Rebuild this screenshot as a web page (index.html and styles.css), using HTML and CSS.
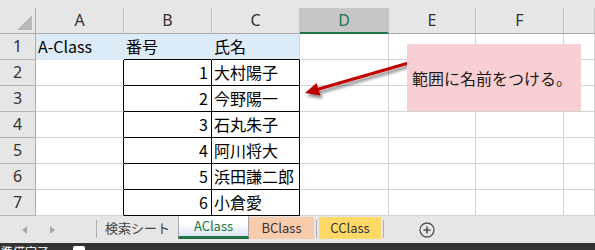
FILE: index.html
```html
<!DOCTYPE html>
<html lang="ja">
<head>
    <meta charset="UTF-8">
    <meta name="viewport" content="width=device-width, initial-scale=1.0">
    <title>AClass</title>
    <link rel="stylesheet" href="styles.css">
</head>
<body>
    <div class="sheet">
        <div class="topstrip"></div>
        <div class="grid">
            <div class="head corner"><span class="tri"></span></div>
            <div class="head">A</div>
            <div class="head">B</div>
            <div class="head">C</div>
            <div class="head sel">D</div>
            <div class="head">E</div>
            <div class="head">F</div>
            <div class="head"></div>

            <div class="rowhead">1</div>
            <div class="cell title">A-Class</div>
            <div class="cell title">番号</div>
            <div class="cell title last">氏名</div>
            <div class="cell"></div>
            <div class="cell"></div>
            <div class="cell"></div>
            <div class="cell"></div>

            <div class="rowhead">2</div>
            <div class="cell edge"></div>
            <div class="cell box num">1</div>
            <div class="cell box">大村陽子</div>
            <div class="cell"></div>
            <div class="cell"></div>
            <div class="cell"></div>
            <div class="cell"></div>

            <div class="rowhead">3</div>
            <div class="cell edge"></div>
            <div class="cell box num">2</div>
            <div class="cell box">今野陽一</div>
            <div class="cell"></div>
            <div class="cell"></div>
            <div class="cell"></div>
            <div class="cell"></div>

            <div class="rowhead">4</div>
            <div class="cell edge"></div>
            <div class="cell box num">3</div>
            <div class="cell box">石丸朱子</div>
            <div class="cell"></div>
            <div class="cell"></div>
            <div class="cell"></div>
            <div class="cell"></div>

            <div class="rowhead">5</div>
            <div class="cell edge"></div>
            <div class="cell box num">4</div>
            <div class="cell box">阿川将大</div>
            <div class="cell"></div>
            <div class="cell"></div>
            <div class="cell"></div>
            <div class="cell"></div>

            <div class="rowhead">6</div>
            <div class="cell edge"></div>
            <div class="cell box num">5</div>
            <div class="cell box">浜田謙二郎</div>
            <div class="cell"></div>
            <div class="cell"></div>
            <div class="cell"></div>
            <div class="cell"></div>

            <div class="rowhead">7</div>
            <div class="cell edge"></div>
            <div class="cell box num">6</div>
            <div class="cell box">小倉愛</div>
            <div class="cell"></div>
            <div class="cell"></div>
            <div class="cell"></div>
            <div class="cell"></div>
        </div>

        <svg class="arrow" width="595" height="216" viewBox="0 0 595 216">
            <defs>
                <filter id="shadow" x="-20%" y="-50%" width="140%" height="200%">
                    <feDropShadow dx="2" dy="3" stdDeviation="1.6" flood-color="#000" flood-opacity="0.45"/>
                </filter>
            </defs>
            <g filter="url(#shadow)">
                <line x1="412" y1="62" x2="317" y2="89.5" stroke="#c00000" stroke-width="3"/>
                <polygon points="305,93 316.5,83 320.5,95.5" fill="#c00000"/>
            </g>
        </svg>
        <div class="callout">範囲に名前をつける。</div>
    </div>

    <div class="tabbar">
        <div class="nav">
            <span class="prev"></span>
            <span class="next"></span>
        </div>
        <span class="sep"></span>
        <div class="tab search">検索シート</div>
        <div class="tab active">AClass</div>
        <div class="tab peach">BClass</div>
        <span class="sep small"></span>
        <div class="tab yellow">CClass</div>
        <span class="sep small"></span>
        <svg class="add" width="16" height="16" viewBox="0 0 16 16">
            <circle cx="8" cy="8" r="7" fill="none" stroke="#555" stroke-width="1.3"/>
            <path d="M4.5 8h7M8 4.5v7" stroke="#555" stroke-width="1.6"/>
        </svg>
    </div>

    <div class="status">
        <span class="ready">準備完了</span>
        <span class="macro"></span>
    </div>
</body>
</html>
```

FILE: styles.css
```css
body {
    margin: 0;
    width: 595px;
    height: 250px;
    overflow: hidden;
    background: #fff;
    font-family: "Noto Sans CJK JP", "Noto Sans", sans-serif;
}
.sheet {
    position: relative;
}
.topstrip {
    height: 8px;
    background: #e6e6e6;
}
.grid {
    display: grid;
    grid-template-columns: 36px 88px 88px 88px 89px 87px 88px 31px;
    grid-auto-rows: 26px;
}
.grid > div {
    box-sizing: border-box;
    border-right: 1px solid #d4d4d4;
    border-bottom: 1px solid #d4d4d4;
    white-space: nowrap;
    overflow: hidden;
}
.grid > .head {
    background: #e6e6e6;
    border-right-color: #c4c4c4;
    border-bottom-color: #ababab;
    text-align: center;
    font: 16px/25px "Noto Sans", sans-serif;
    color: #333;
}
.grid > .head.sel {
    background: #c6c6c6;
    color: #217346;
    border-bottom: 2px solid #217346;
    line-height: 24px;
}
.grid > .corner {
    position: relative;
    border-right-color: #ababab;
}
.tri {
    position: absolute;
    right: 3px;
    bottom: 3px;
    border-left: 15px solid transparent;
    border-bottom: 15px solid #b9b9b9;
}
.grid > .rowhead {
    background: #e6e6e6;
    border-right-color: #ababab;
    border-bottom-color: #b4b4b4;
    text-align: center;
    font: 16px/25px "Noto Sans", sans-serif;
    color: #333;
}
.grid > .cell {
    font-size: 16px;
    line-height: 24px;
    padding: 0 2px;
    color: #000;
}
.grid > .title {
    background: #ddebf7;
    border-right-color: #ddebf7;
    border-bottom-color: #ddebf7;
}
.grid > .title.last {
    border-right-color: #d4d4d4;
}
.grid > .edge {
    border-right-color: #000;
}
.grid > .box {
    border-right-color: #000;
    border-bottom-color: #000;
}
.grid > .title:nth-child(11),
.grid > .title:nth-child(12) {
    border-bottom-color: #000;
}
.grid > .num {
    text-align: right;
    padding-right: 3px;
}
.arrow {
    position: absolute;
    left: 0;
    top: 0;
}
.callout {
    position: absolute;
    left: 407px;
    top: 44px;
    width: 174px;
    height: 67px;
    box-sizing: border-box;
    padding-left: 5px;
    background: #f8d0d4;
    display: flex;
    align-items: center;
    font-size: 16px;
    color: #1a1a1a;
    white-space: nowrap;
}
.tabbar {
    height: 27px;
    background: #e6e6e6;
    display: flex;
    align-items: flex-start;
    font-size: 13px;
    color: #333;
}
.nav {
    width: 96px;
    height: 27px;
    display: flex;
    align-items: center;
    padding-left: 22px;
    box-sizing: border-box;
}
.prev {
    width: 0;
    height: 0;
    border-top: 4px solid transparent;
    border-bottom: 4px solid transparent;
    border-right: 5px solid #a8a8a8;
}
.next {
    width: 0;
    height: 0;
    margin-left: 23px;
    border-top: 4px solid transparent;
    border-bottom: 4px solid transparent;
    border-left: 5px solid #a8a8a8;
}
.sep {
    width: 1px;
    height: 18px;
    margin-top: 4px;
    background: #b0b0b0;
}
.sep.small {
    margin: 4px 2px 0;
}
.tab {
    height: 22px;
    margin-top: 1px;
    line-height: 22px;
    text-align: center;
    box-sizing: border-box;
}
.tab.search {
    width: 81px;
    color: #444;
}
.tab.active {
    width: 71px;
    height: 24px;
    margin-top: -1px;
    line-height: 22px;
    background: linear-gradient(#fff 40%, #d9e5f2);
    border-left: 1px solid #a6a6a6;
    border-right: 1px solid #a6a6a6;
    border-bottom: 3px solid #217346;
    color: #217346;
}
.tab.peach {
    width: 65px;
    background: #f8cbad;
}
.tab.yellow {
    width: 62px;
    background: #ffd966;
}
.add {
    margin: 6px 0 0 33px;
}
.status {
    height: 7px;
    background: #333;
    overflow: hidden;
    display: flex;
    align-items: flex-start;
    color: #fff;
    font-size: 12px;
    line-height: 12px;
}
.ready {
    padding: 3px 0 0 1px;
}
.macro {
    width: 12px;
    height: 6px;
    margin: 3px 0 0 24px;
    background: #fff;
    border-radius: 2px;
}
```
